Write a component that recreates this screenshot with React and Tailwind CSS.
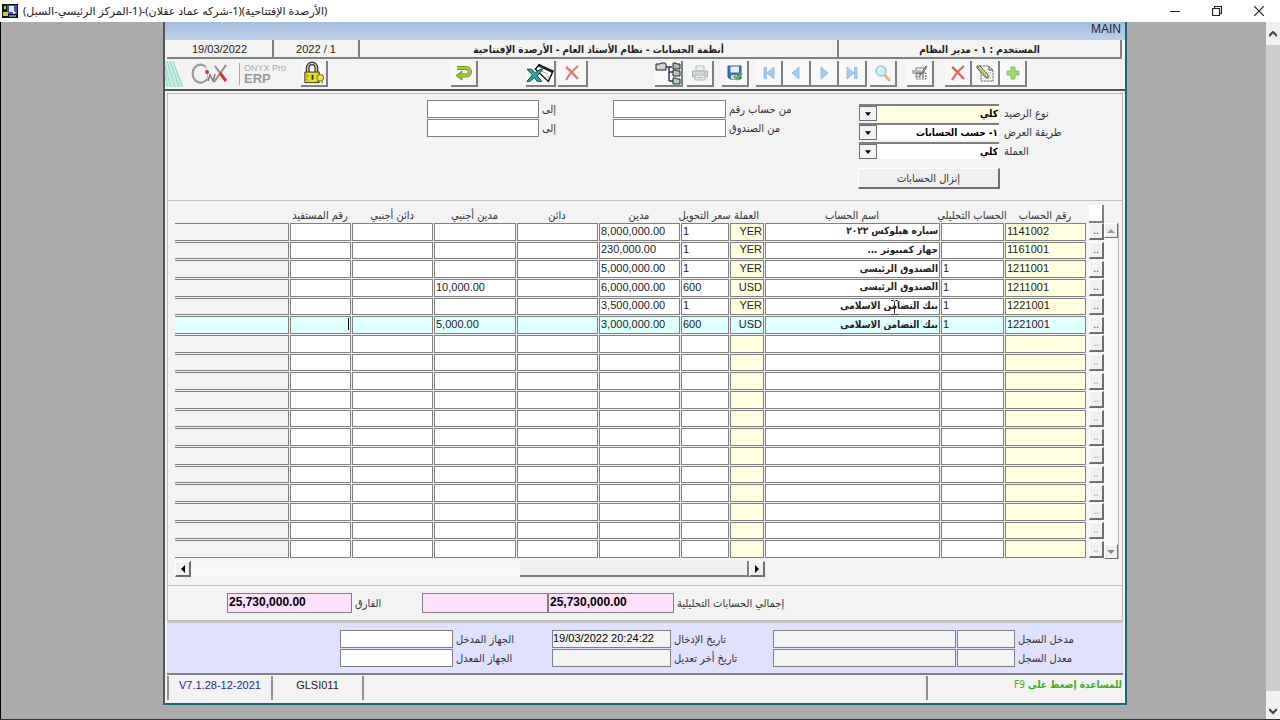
import clsx from 'clsx';

const columns = [
  { key: 'account', label: 'رقم الحساب', width: 'w-[82px]', tone: 'key' },
  { key: 'sub', label: 'الحساب التحليلي', width: 'w-16' },
  { key: 'name', label: 'اسم الحساب', width: '', rtl: true },
  { key: 'currency', label: 'العملة', width: 'w-[35px]', tone: 'currency' },
  { key: 'rate', label: 'سعر التحويل', width: 'w-[49px]' },
  { key: 'debit', label: 'مدين', width: 'w-[82px]' },
  { key: 'credit', label: 'دائن', width: 'w-[82px]' },
  { key: 'debitForeign', label: 'مدين أجنبي', width: 'w-[83px]' },
  { key: 'creditForeign', label: 'دائن أجنبي', width: 'w-[82px]' },
  { key: 'payee', label: 'رقم المستفيد', width: 'w-[62px]' },
  { key: 'extra', label: '', width: 'w-[114px]', tone: 'disabled' },
];

const entries = [
  { account: '1141002', name: 'سياره هيلوكس ٢٠٢٢', currency: 'YER', rate: '1', debit: '8,000,000.00' },
  { account: '1161001', name: 'جهاز كمبيوتر ...', currency: 'YER', rate: '1', debit: '230,000.00' },
  { account: '1211001', sub: '1', name: 'الصندوق الرئيسي', currency: 'YER', rate: '1', debit: '5,000,000.00' },
  { account: '1211001', sub: '1', name: 'الصندوق الرئيسي', currency: 'USD', rate: '600', debit: '6,000,000.00', debitForeign: '10,000.00' },
  { account: '1221001', sub: '1', name: 'بنك التضامن الاسلامي', currency: 'YER', rate: '1', debit: '3,500,000.00' },
  { account: '1221001', sub: '1', name: 'بنك التضامن الاسلامي', currency: 'USD', rate: '600', debit: '3,000,000.00', debitForeign: '5,000.00' },
];
const rows = [...entries, ...Array.from({ length: 12 }, () => ({}))];
const ACTIVE_ROW = 5;

const arabic = "font-['DejaVu_Sans_Condensed','DejaVu_Sans',sans-serif]";
const latin = "font-['Liberation_Sans',sans-serif]";
const raised = 'border border-t-white border-l-white border-r-[#6e6e6e] border-b-[#6e6e6e]';

/* ---------- toolbar drawings ---------- */

function AddIcon() {
  return (
    <svg viewBox="0 0 16 16" className="size-4">
      <path d="M6 2h4v4h4v4h-4v4H6v-4H2V6h4z" fill="#a2d977" stroke="#7fc25c" />
    </svg>
  );
}

function EditIcon() {
  return (
    <svg viewBox="0 0 20 18" className="h-[18px] w-5" fill="none">
      <path d="M5 2h9l4 4v11H6V8" stroke="#555" strokeDasharray="2 1" />
      <path d="M14 2v4h4" stroke="#444" />
      <path d="M9 9h7M10 12h6M11 14h5" stroke="#8a8a8a" strokeDasharray="1 1" />
      <path d="M2 2l3 0 8 9 0 3-3-1-8-9z" fill="#e3e58a" stroke="#555" />
      <path d="M3 3l8 9" stroke="#8e8f3f" />
    </svg>
  );
}

function DeleteIcon({ color = '#d4665f' }) {
  return (
    <svg viewBox="0 0 16 16" className="size-4" fill="none">
      <path d="M2 2c4 3 8 8 12 12" stroke={color} strokeWidth="2.4" />
      <path d="M14 1C9 5 5 10 2 15" stroke={color} strokeWidth="2.2" />
    </svg>
  );
}

function FormIcon() {
  return (
    <svg viewBox="0 0 18 16" className="h-4 w-[18px]" fill="none">
      <path d="M5 3h8v5H1M5 3v2M1 6h9" stroke="#777" />
      <path d="M5 8h10v6H5zM5 11h10M8 8v6M12 8v6" stroke="#666" strokeDasharray="2 1" />
      <path d="M15 1l1 1-5 7-2 1 1-2z" fill="#b9c4a2" stroke="#555" strokeWidth=".8" />
    </svg>
  );
}

function SearchIcon() {
  return (
    <svg viewBox="0 0 18 18" className="size-[18px]" fill="none">
      <path d="M10 10l5 6" stroke="#dcb98c" strokeWidth="3" strokeLinecap="round" />
      <circle cx="7" cy="7" r="5" fill="#cdeef5" stroke="#9cc6dc" strokeWidth="1.5" />
      <path d="M4.500 6a3 3 0 0 1 3-2" stroke="#fff" strokeWidth="1.200" />
    </svg>
  );
}

function NavIcon({ kind }) {
  return (
    <svg viewBox="0 0 14 14" className="size-3.5" fill="#a9cbea" stroke="#8fb4da" strokeWidth=".8">
      {kind === 'last' && <path d="M2 1l7 6-7 6zM9.500 1.500h2.500v11H9.500z" />}
      {kind === 'next' && <path d="M4 1l7 6-7 6z" />}
      {kind === 'prev' && <path d="M10 1L3 7l7 6z" />}
      {kind === 'first' && <path d="M2 1.500h2.500v11H2zM12 1v12L5 7z" />}
    </svg>
  );
}

function SaveIcon() {
  return (
    <svg viewBox="0 0 16 16" className="size-4">
      <path d="M1 1h13v13H3l-2-2z" fill="#3f73b5" stroke="#2b5690" />
      <path d="M3.500 1.500h8.500v6H3.500z" fill="#e8f0fa" />
      <path d="M4 10h6v4H4z" fill="#cfd8e4" />
      <path d="M7 11l3 3 5-6" fill="none" stroke="#5db53a" strokeWidth="2.400" />
    </svg>
  );
}

function PrintIcon() {
  return (
    <svg viewBox="0 0 18 16" className="h-4 w-[18px]">
      <path d="M5 1h8v5H5z" fill="#eef2f0" stroke="#b7bfbb" />
      <path d="M1.500 6h15v6h-15z" fill="#d3d9d6" stroke="#aab2ae" />
      <path d="M4 10h10v5H4z" fill="#e3efe0" stroke="#b0bcae" />
      <path d="M6 12.500h6" stroke="#9fc795" />
      <circle cx="14" cy="8" r="1" fill="#9fd08b" />
    </svg>
  );
}

function TreeIcon() {
  return (
    <svg viewBox="0 0 26 24" className="h-6 w-[26px]">
      <path d="M11 6h6M14 6v14M14 11h4M14 20h4" fill="none" stroke="#34347e" strokeWidth="1.500" />
      <path d="M1 3h4l1-1h4l1 1v6H1z" fill="#d8cfd8" stroke="#222" />
      <path d="M18 2h3l1 1h3v5h-7z" fill="#b9b3c4" stroke="#222" />
      <path d="M18 9h3l1 1h3v5h-7z" fill="#a9cfb5" stroke="#222" />
      <path d="M18 17h3l1 1h3v5h-7z" fill="#a9cfb5" stroke="#222" />
    </svg>
  );
}

function ExcelIcon() {
  return (
    <svg viewBox="0 0 30 22" className="h-[22px] w-[30px]">
      <path d="M10 7L14 2 29 9 24 20z" fill="#fff" stroke="#111" strokeWidth="1.500" />
      <path d="M14 2l15 7-1 2-15-7z" fill="#222" />
      <path d="M15 8l8 4M22 16l3-1" stroke="#999" fill="none" />
      <path d="M1 7h5l4 4 5-4h3l-6 7 5 6h-5l-3-4-5 4H1l6-7z" fill="#2fa8a4" stroke="#0b3f46" />
    </svg>
  );
}

function ReturnIcon() {
  return (
    <svg viewBox="0 0 18 16" className="h-4 w-[18px]" fill="none">
      <path d="M2 3h9a4 3.800 0 0 1 0 7.600H7" stroke="#6f9b1f" strokeWidth="4" />
      <path d="M7 6v9L1 10.600z" fill="#8fc72e" stroke="#6f9b1f" />
      <path d="M2 3h9a4 3.800 0 0 1 0 7.600H6" stroke="#a3d33c" strokeWidth="2.200" />
    </svg>
  );
}

function LockIcon() {
  return (
    <svg viewBox="0 0 26 24" className="h-6 w-[26px]">
      <path d="M7 12V7a4.500 5 0 0 1 9 0v5" fill="none" stroke="#333" strokeWidth="4" />
      <path d="M7 12V7a4.500 5 0 0 1 9 0v5" fill="none" stroke="#ccc" strokeWidth="1.500" />
      <path d="M4 11h15v11H4z" fill="#e8de1e" stroke="#333" />
      <path d="M5 13l3 2-3 2M5 18l3 2" fill="none" stroke="#9d9410" />
      <path d="M11 14h2v5h-2z" fill="#333" />
      <circle cx="20" cy="17" r="3.500" fill="#efe53a" stroke="#6d6710" />
      <path d="M18 20l-3 3M22 20v3" stroke="#6d6710" />
    </svg>
  );
}

function BrandMark() {
  return (
    <svg viewBox="0 0 64 28" className="h-7 w-16" fill="none">
      <path d="M0 1h8c4 7 7 18 11 26H0z" fill="#c9ece3" />
      <path d="M0 6l6 21M2 1l8 26M5 1l9 26M8 1l9 25M0 14l3 13" stroke="#7fd3c3" strokeWidth=".8" />
      <path d="M41 7a8 9 0 1 0 1 12" stroke="#9a9a9a" strokeWidth="2.200" />
      <path d="M37 4c4 2 7 7 5 15" stroke="#b4b4b4" />
      <circle cx="42" cy="12" r="2" fill="#d8343a" />
      <path d="M43 21l2-6 3 6 2-7" stroke="#777" strokeWidth="1.500" />
      <path d="M61 5L49 22" stroke="#8d8d8d" strokeWidth="2" />
      <path d="M50 6l5 7" stroke="#8d8d8d" strokeWidth="2" />
      <path d="M55 13l6 8" stroke="#d8343a" strokeWidth="3" />
    </svg>
  );
}

/* ---------- small controls ---------- */

function ToolButton({ label, className, children }) {
  return (
    <button
      type="button"
      aria-label={label}
      className={clsx('flex h-[26px] shrink-0 items-center justify-center border-r-2 border-b-2 border-r-[#808080] border-b-[#808080] bg-[#f8f8f8]', className)}
    >
      {children}
    </button>
  );
}

function Combo({ id, label, value, className }) {
  return (
    <div className="flex h-[19px] items-center">
      <label htmlFor={id} className="w-[60px] pt-[3px] text-left">{label}</label>
      <div className={clsx('mr-[5px] flex h-[17px] w-[140px] border-t-2 border-t-[#808080]', className)}>
        <select id={id} className="min-w-0 flex-1 appearance-none pr-px text-[10px] leading-3 font-bold text-black outline-none">
          <option>{value}</option>
        </select>
        <span aria-hidden="true" className="flex w-[18px] items-center justify-center border border-[#6e6e6e] bg-[#f3f3f3]">
          <svg viewBox="0 0 8 5" className="h-1 w-1.5"><path d="M0 0h8L4 5z" /></svg>
        </span>
      </div>
    </div>
  );
}

function Field({ id, label, labelClass, fieldClass, value = '' }) {
  return (
    <div className="flex h-[19px] items-center">
      <label htmlFor={id} className={clsx('shrink-0 pt-[3px] text-left whitespace-nowrap', labelClass)}>{label}</label>
      <input
        id={id}
        dir="ltr"
        defaultValue={value}
        className={clsx('mr-[3px] h-[18px] border border-[#808080] pb-0.5 text-left text-[11px] text-black outline-none', latin, fieldClass)}
      />
    </div>
  );
}

function Arrow({ d, className, label }) {
  return (
    <button type="button" aria-label={label} className={clsx('flex items-center justify-center bg-[#f0f0f0]', raised, className)}>
      <svg viewBox="0 0 8 8" className="size-2"><path d={d} fill="currentColor" /></svg>
    </button>
  );
}

/* ---------- sections ---------- */

function TitleBar() {
  return (
    <header dir="ltr" className="flex h-[22px] items-center bg-white pr-4 pl-0.5">
      <svg viewBox="0 0 16 16" className="size-4">
        <path d="M0 1h16v14H0z" fill="#111" />
        <path d="M5 2h10v9H5z" fill="#3b4fd0" />
        <path d="M7 3h5v6H7z" fill="#dfe6ff" />
        <path d="M11 7l3 3-3 1z" fill="#fff" />
        <path d="M2 3h2v3H2zM1 9h5v4H1z" fill="#d8c927" />
        <path d="M7 12h7v2H7z" fill="#5d8d92" />
      </svg>
      <h1 dir="rtl" className="ml-[5px] font-['Noto_Sans','DejaVu_Sans',sans-serif] text-[11px] whitespace-nowrap text-[#222]">
        (الأرصدة الإفتتاحية)(1-شركه عماد عقلان)-(1-المركز الرئيسي-السبل)
      </h1>
      <div className="ml-auto flex items-center gap-8 text-[#222]">
        <button type="button" aria-label="تصغير">
          <svg viewBox="0 0 10 10" className="size-2.5" fill="none" stroke="currentColor"><path d="M0 5.500h10" /></svg>
        </button>
        <button type="button" aria-label="استعادة">
          <svg viewBox="0 0 10 10" className="size-2.5" fill="none" stroke="currentColor" strokeWidth="1.200"><path d="M.5 2.500h7v7h-7zM2.500 2.500v-2h7v7h-2" /></svg>
        </button>
        <button type="button" aria-label="إغلاق">
          <svg viewBox="0 0 10 10" className="size-2.5" fill="none" stroke="currentColor" strokeWidth="1.200"><path d="M0 0l10 10M10 0L0 10" /></svg>
        </button>
      </div>
    </header>
  );
}

function InfoBar() {
  const cell = 'flex items-center justify-center border-r-2 border-b-2 border-r-[#808080] border-b-[#808080] pt-0.5 text-[#222]';
  return (
    <div dir="ltr" className="flex h-[19px] pr-[3px] pl-0.5">
      <div className={clsx(cell, latin, 'w-[107px] text-[11px]')}>19/03/2022</div>
      <div className={clsx(cell, latin, 'w-[86px] text-[11px]')}>2022 / 1</div>
      <div dir="rtl" className={clsx(cell, 'flex-1 text-[10px] font-bold')}>أنظمة الحسابات - نظام الأستاذ العام - الأرصدة الإفتتاحية</div>
      <div dir="rtl" className={clsx(cell, 'w-[283px] text-[10px] font-bold')}>المستخدم : ١ - مدير النظام</div>
    </div>
  );
}

function Toolbar() {
  return (
    <div className="flex h-8 items-center border-b-2 border-b-[#555] pr-[98px]">
      <ToolButton label="إضافة" className="w-[27px]"><AddIcon /></ToolButton>
      <ToolButton label="تعديل" className="w-7"><EditIcon /></ToolButton>
      <ToolButton label="حذف" className="w-[27px]"><DeleteIcon /></ToolButton>
      <ToolButton label="نموذج" className="mr-[11px] w-[27px]"><FormIcon /></ToolButton>
      <ToolButton label="بحث" className="mr-[10px] w-[27px]"><SearchIcon /></ToolButton>
      <ToolButton label="الأخير" className="mr-[3px] w-7"><NavIcon kind="last" /></ToolButton>
      <ToolButton label="التالي" className="w-7"><NavIcon kind="next" /></ToolButton>
      <ToolButton label="السابق" className="w-7"><NavIcon kind="prev" /></ToolButton>
      <ToolButton label="الأول" className="w-[27px]"><NavIcon kind="first" /></ToolButton>
      <ToolButton label="حفظ" className="mr-[7px] w-[27px]"><SaveIcon /></ToolButton>
      <ToolButton label="طباعة" className="mr-2 w-[27px]"><PrintIcon /></ToolButton>
      <ToolButton label="شجرة الحسابات" className="mr-1 w-7"><TreeIcon /></ToolButton>
      <ToolButton label="إلغاء" className="mr-[67px] w-[30px]"><DeleteIcon color="#e07a72" /></ToolButton>
      <ToolButton label="تصدير إكسل" className="mr-0.5 w-[30px]"><ExcelIcon /></ToolButton>
      <ToolButton label="رجوع" className="mr-12 w-[27px]"><ReturnIcon /></ToolButton>
      <div dir="ltr" className="mr-auto flex items-center">
        <BrandMark />
        <div className="ml-[10px] border-l border-l-[#aaa] pl-1 font-['Liberation_Sans',sans-serif] leading-none text-[#a8a8a8]">
          <div className="text-[9px] leading-[10px]">ONYX Pro</div>
          <div className="text-[13px] leading-3 font-bold text-[#999]">ERP</div>
        </div>
        <ToolButton label="قفل" className="ml-[15px] w-[27px]"><LockIcon /></ToolButton>
      </div>
    </div>
  );
}

function Filters() {
  return (
    <section className="mx-0.5 mt-0.5 flex h-[108px] items-start border border-[#bdbdbd] pr-[58px]">
      <div className="pt-[9px]">
        <Combo id="balance-type" label="نوع الرصيد" value="كلي" className="bg-[#ffffe0]" />
        <Combo id="view-by" label="طريقة العرض" value="١- حسب الحسابات" className="bg-white" />
        <Combo id="currency" label="العملة" value="كلي" className="bg-white" />
        <button type="button" className={clsx('mt-2 mr-16 h-[21px] w-[142px] border-r-2 border-b-2 bg-[#efefef] pt-0.5', raised)}>إنزال الحسابات</button>
      </div>
      <div className="mr-16 pt-[5px]">
        <Field id="from-account" label="من حساب رقم" labelClass="w-[65px]" fieldClass="w-[113px] bg-white" />
        <Field id="from-box" label="من الصندوق" labelClass="w-[65px]" fieldClass="w-[113px] bg-white" />
      </div>
      <div className="mr-[54px] pt-[5px]">
        <Field id="to-account" label="إلى" labelClass="w-[17px]" fieldClass="w-28 bg-white" />
        <Field id="to-box" label="إلى" labelClass="w-[17px]" fieldClass="w-28 bg-white" />
      </div>
    </section>
  );
}

function EntryCell({ row, index, column }) {
  const active = index === ACTIVE_ROW;
  const hasCaret = active && column.key === 'payee';
  const hasPointer = index === 4 && column.key === 'name';
  return (
    <td className={clsx('p-0 pb-px', column.key !== 'extra' && 'pl-px', (hasCaret || hasPointer) && 'relative')}>
      <input
        aria-label={`${column.label || 'بيان'} ${index + 1}`}
        dir={column.rtl ? 'rtl' : 'ltr'}
        defaultValue={row[column.key] || ''}
        className={clsx(
          'block h-full w-full border border-[#808080] px-px pb-0.5 leading-3 text-[#222] outline-none',
          column.rtl ? 'text-[10px] font-bold' : 'text-[11px]',
          !column.rtl && latin,
          column.tone === 'currency' ? 'text-right' : 'text-start',
          column.tone === 'disabled' && 'border-l-0',
          active && 'bg-[#e0ffff]',
          !active && (column.tone === 'key' || column.tone === 'currency') && 'bg-[#ffffe0]',
          !active && column.tone === 'disabled' && 'bg-[#f3f3f3]',
          !active && !column.tone && 'bg-white'
        )}
      />
      {hasCaret && <span className="absolute top-0.5 right-0.5 h-3 w-px bg-black" />}
      {hasPointer && (
        <svg viewBox="0 0 7 15" className="absolute top-0.5 right-[42px] h-[15px] w-[7px]" fill="none" stroke="#333">
          <path d="M0 .5h2.500l1 1 1-1H7M3.500 1.500v12M0 14.500h2.500l1-1 1 1H7" />
        </svg>
      )}
    </td>
  );
}

function EntriesTable() {
  return (
    <section className="mx-0.5 border border-t-0 border-[#bdbdbd] pt-[3px] pb-2">
      <div className="flex pr-[3px] pl-[7px]">
        <div className="mt-[19px] flex w-[15px] shrink-0 flex-col justify-between border-r border-r-[#bdbdbd] bg-[#f8f8f8]">
          <Arrow label="أعلى" d="M0 6l4-4 4 4z" className="h-[15px] text-[#999]" />
          <Arrow label="أسفل" d="M0 2h8L4 6z" className="h-[15px] text-[#888]" />
        </div>
        <div className="min-w-0 flex-1">
          <table className="h-[355px] w-full table-fixed border-collapse">
            <thead>
              <tr className="h-[19px]">
                <th className="w-[18px] p-0">
                  <input aria-label="تحديد" className="block h-[18px] w-[15px] border-r-2 border-b-2 border-[#808080] bg-white outline-none" />
                </th>
                {columns.map((column) => (
                  <th key={column.key} className={clsx('p-0 font-normal', column.width)}>
                    <span className="flex justify-center pt-1 leading-[14px] whitespace-nowrap">{column.label}</span>
                  </th>
                ))}
              </tr>
            </thead>
            <tbody>
              {rows.map((row, index) => (
                <tr key={index}>
                  <td className="p-0 pb-px">
                    <button type="button" aria-label={`تفاصيل ${index + 1}`} className={clsx('block h-[17px] w-[15px] border-r-2 border-b-2 bg-[#f0f0f0] text-[10px] leading-3', raised, index > ACTIVE_ROW && 'text-[#999]')}>..</button>
                  </td>
                  {columns.map((column) => (
                    <EntryCell key={column.key} row={row} index={index} column={column} />
                  ))}
                </tr>
              ))}
            </tbody>
          </table>
        </div>
      </div>
      <div dir="ltr" className="mt-0.5 mr-[357px] ml-[7px] flex h-4 bg-[#f8f8f8]">
        <Arrow label="يسار" d="M6 0v8L2 4z" className="w-4 border-r-2 border-b-2 text-black" />
        <div className="ml-auto w-[229px] border-r-2 border-b-2 border-[#808080] bg-[#efefef]" />
        <Arrow label="يمين" d="M2 0v8l4-4z" className="w-4 border-r-2 border-b-2 text-black" />
      </div>
    </section>
  );
}

function Totals() {
  const money = "h-5 border border-[#808080] bg-[#ffe0ff] px-px pb-[3px] text-left font-['Liberation_Sans',sans-serif] text-xs font-bold text-black outline-none";
  return (
    <section className="mx-0.5 flex h-[35px] items-center border border-t-0 border-[#bdbdbd] pr-[330px]">
      <label htmlFor="total-debit" className="w-[115px] pt-[3px] text-left whitespace-nowrap">إجمالي الحسابات التحليلية</label>
      <input id="total-debit" dir="ltr" defaultValue="25,730,000.00" className={clsx(money, 'mr-[3px] w-[126px]')} />
      <input aria-label="إجمالي الدائن" dir="ltr" className={clsx(money, 'w-[126px]')} />
      <label htmlFor="difference" className="mr-[38px] w-[29px] pt-[3px] text-left whitespace-nowrap">الفارق</label>
      <input id="difference" dir="ltr" defaultValue="25,730,000.00" className={clsx(money, 'mr-[3px] w-[125px]')} />
    </section>
  );
}

function AuditTrail() {
  const second = 'mr-px h-[18px] w-[183px] border border-[#808080] bg-[#f3f3f3] outline-none';
  return (
    <section className="mx-0.5 flex h-[54px] items-center border-t-2 border-b-2 border-t-[#c8c8c8] border-b-[#808080] bg-[#e0e0ff] pr-[45px]">
      <div>
        <div className="flex items-center">
          <Field id="created-by" label="مدخل السجل" labelClass="w-[60px]" fieldClass="w-[58px] bg-[#f3f3f3]" />
          <input aria-label="اسم مدخل السجل" className={second} />
        </div>
        <div className="flex items-center">
          <Field id="updated-by" label="معدل السجل" labelClass="w-[60px]" fieldClass="w-[58px] bg-[#f3f3f3]" />
          <input aria-label="اسم معدل السجل" className={second} />
        </div>
      </div>
      <div className="mr-[34px]">
        <Field id="created-at" label="تاريخ الإدخال" labelClass="w-[65px]" fieldClass="w-[119px] bg-[#f3f3f3]" value="19/03/2022 20:24:22" />
        <Field id="updated-at" label="تاريخ أخر تعديل" labelClass="w-[65px]" fieldClass="w-[119px] bg-[#f3f3f3]" />
      </div>
      <div className="mr-9">
        <Field id="created-on" label="الجهاز المدخل" labelClass="w-[60px]" fieldClass="w-[113px] bg-white" />
        <Field id="updated-on" label="الجهاز المعدل" labelClass="w-[60px]" fieldClass="w-[113px] bg-white" />
      </div>
    </section>
  );
}

function StatusBar() {
  const cell = 'border-l-2 border-l-[#909090] pt-px text-center';
  return (
    <footer dir="ltr" className="mx-0.5 mt-px mb-[3px] flex h-6 leading-4">
      <div className={clsx(cell, latin, 'w-[104px] text-[11px] text-[#2222bb]')}>V7.1.28-12-2021</div>
      <div className={clsx(cell, latin, 'w-[91px] text-[11px] text-[#222]')}>GLSI011</div>
      <div className={clsx(cell, 'flex-1')} />
      <div dir="rtl" className={clsx(cell, 'w-[197px] pr-px !text-right text-[10px] font-bold text-[#3fae1c]')}>للمساعدة إضغط على <span className="font-normal">F9</span></div>
    </footer>
  );
}

export default function App() {
  return (
    <div dir="rtl" className={clsx('flex min-h-screen flex-col border-b-2 border-b-[#333] bg-[#ababab] text-[11px] text-[#333]', arabic)}>
      <TitleBar />
      <div dir="ltr" className="flex flex-1 border-l border-l-black">
        <div className="flex-1 pr-[139px] pb-3.5 pl-[162px]">
          <main dir="rtl" className="border-r-2 border-b-2 border-l-2 border-r-[#1c6478] border-b-[#1c6478] border-l-[#555] bg-[#f3f3f3]">
            <h2 dir="ltr" className={clsx('flex h-[18px] items-start justify-end bg-linear-to-b from-[#a3bedb] to-[#bcd0ec] pr-1 text-xs leading-[14px] text-[#223]', latin)}>MAIN</h2>
            <InfoBar />
            <Toolbar />
            <Filters />
            <EntriesTable />
            <Totals />
            <AuditTrail />
            <StatusBar />
          </main>
        </div>
        <div className="flex w-3.5 flex-col items-center bg-[#f0f0f0] text-[#444]">
          <button type="button" aria-label="تمرير لأعلى" className="flex h-[23px] items-center justify-center">
            <svg viewBox="0 0 8 8" className="size-2" fill="none" stroke="currentColor" strokeWidth="2"><path d="M0 6l4-4 4 4" /></svg>
          </button>
          <div className="w-full flex-1 bg-[#cdcdcd]" />
          <button type="button" aria-label="تمرير لأسفل" className="flex h-7 items-end justify-center pb-1">
            <svg viewBox="0 0 8 8" className="size-2" fill="none" stroke="currentColor" strokeWidth="2"><path d="M0 2l4 4 4-4" /></svg>
          </button>
        </div>
      </div>
    </div>
  );
}
